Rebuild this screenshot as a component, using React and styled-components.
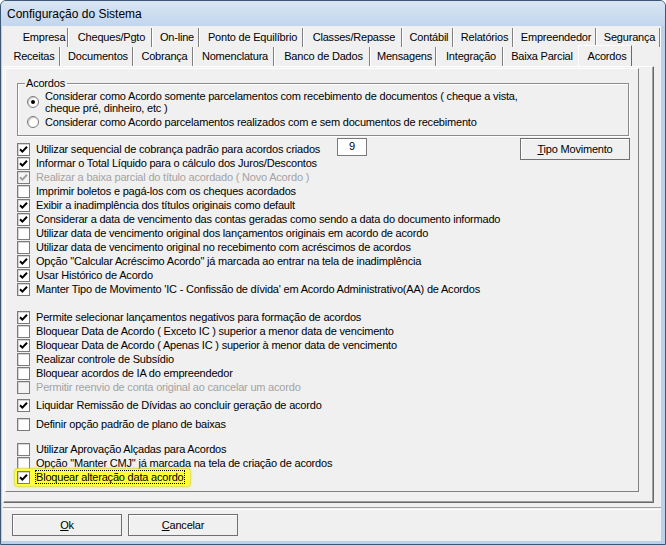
import React from "react";
import styled, { createGlobalStyle } from "styled-components";

const GlobalStyle = createGlobalStyle`
  html, body {
    margin: 0;
    padding: 0;
    background: #ffffff;
  }
  body {
    font-family: "Liberation Sans", Arial, sans-serif;
    font-size: 11px;
    letter-spacing: -0.2px;
    color: #000;
  }
`;

const Window = styled.div`
  width: 666px;
  height: 545px;
  box-sizing: border-box;
  display: flex;
  flex-direction: column;
  border: 1px solid #3d5675;
  border-radius: 6px 6px 0 0;
  background: #b9d1ea;
  overflow: hidden;
`;

const TitleBar = styled.div`
  height: 25px;
  flex: none;
  display: flex;
  align-items: center;
  padding-left: 6px;
  background: linear-gradient(#d9e6f4, #c2d6ed);
  font-size: 12px;
  letter-spacing: 0;
  color: #000;
`;

const Frame = styled.div`
  flex: 1;
  display: flex;
  padding: 0 4px 3px 1px;
  min-height: 0;
`;

const Client = styled.div`
  flex: 1;
  display: flex;
  flex-direction: column;
  background: #f0f0f0;
  min-width: 0;
`;

const Tabs = styled.div`
  padding-top: 2px;
  display: flex;
  flex-direction: column;
  overflow: hidden;
`;

const TabRow = styled.div`
  display: flex;
  height: 19px;
  margin-left: ${(p) => p.$indent}px;
`;

const Tab = styled.div`
  flex: none;
  box-sizing: border-box;
  width: ${(p) => p.$w}px;
  height: 19px;
  padding-left: 4px;
  text-align: center;
  line-height: 19px;
  white-space: nowrap;
  border-right: 1px solid ${(p) => (p.$noSep ? "transparent" : "#808080")};
  box-shadow: ${(p) => (p.$noSep ? "none" : "1px 0 0 #ffffff")};
`;

const ActiveTab = styled.div`
  flex: none;
  box-sizing: border-box;
  width: ${(p) => p.$w}px;
  height: 21px;
  margin-top: -2px;
  padding: 1px 0 0 4px;
  text-align: center;
  line-height: 19px;
  background: #f0f0f0;
  border-top: 1px solid #ffffff;
  border-left: 1px solid #ffffff;
  border-right: 1px solid #696969;
  position: relative;
  z-index: 2;
`;

const Page = styled.div`
  box-sizing: border-box;
  margin-left: 1px;
  width: 651px;
  height: 437px;
  border-top: 1px solid #ffffff;
  border-left: 1px solid #ffffff;
  border-right: 1px solid #696969;
  border-bottom: 1px solid #696969;
  box-shadow: inset -1px -1px 0 #a0a0a0;
  padding: 1px 0 0 1px;
`;

const Inner = styled.div`
  box-sizing: border-box;
  width: 634px;
  height: 424px;
  border-right: 1px solid #808080;
  border-bottom: 1px solid #808080;
  border-left: 1px solid #ffffff;
  border-top: 1px solid #ffffff;
  display: flex;
  flex-direction: column;
`;

const Group = styled.fieldset`
  box-sizing: border-box;
  margin: 8px 0 0 11px;
  width: 612px;
  padding: 0 0 7px 9px;
  border: 1px solid #8c8c8c;
  box-shadow: inset 1px 1px 0 #ffffff, 1px 1px 0 #ffffff;
  min-width: 0;
`;

const Legend = styled.legend`
  margin-left: -2px;
  padding: 0 2px 0 1px;
  line-height: 13px;
`;

const RadioRow = styled.div`
  display: flex;
  align-items: center;
  gap: 6px;
  line-height: 12px;
  margin-top: ${(p) => p.$top || 0}px;
`;

const RadioDot = styled.span`
  flex: none;
  width: 12px;
  height: 12px;
  box-sizing: border-box;
  border-radius: 50%;
  border: 1px solid #7a7a7a;
  background: #ffffff;
  box-shadow: inset 1px 1px 1px #c8c8c8;
  display: flex;
  align-items: center;
  justify-content: center;
  &::after {
    content: "";
    width: 4px;
    height: 4px;
    border-radius: 50%;
    background: ${(p) => (p.$on ? "#000" : "transparent")};
  }
`;

const List = styled.div`
  display: flex;
  flex-direction: column;
  padding: 6px 8px 0 11px;
`;

const Row = styled.div`
  display: flex;
  align-items: center;
  height: 14px;
  margin-top: ${(p) => p.$gap || 0}px;
`;

const Check = styled.label`
  display: flex;
  align-items: center;
  gap: 6px;
  white-space: nowrap;
  color: ${(p) => (p.$disabled ? "#a3a3a3" : "#000")};
  width: ${(p) => (p.$w ? `${p.$w}px` : "auto")};
`;

const Box = styled.span`
  flex: none;
  width: 13px;
  height: 13px;
  box-sizing: border-box;
  border: 1px solid #7b7b7b;
  background: ${(p) => (p.$disabled ? "#f4f4f4" : "#ffffff")};
  box-shadow: inset 1px 1px 0 #d4d4d4;
  display: flex;
  align-items: center;
  justify-content: center;
`;

const Highlight = styled.div`
  display: flex;
  align-items: center;
  height: 17px;
  margin-left: -2px;
  padding: 0 6px 0 2px;
  background: #ffff3a;
  border-radius: 3px;
  box-shadow: 0 0 2px 1px #dede30;
`;

const Focus = styled.span`
  outline: 1px dotted #000;
  outline-offset: 0;
  line-height: 12px;
`;

const NumBox = styled.div`
  flex: none;
  width: 30px;
  height: 18px;
  box-sizing: border-box;
  margin-top: -4px;
  border: 1px solid #7a7a7a;
  background: #ffffff;
  text-align: center;
  line-height: 15px;
`;

const Button = styled.button`
  flex: none;
  box-sizing: border-box;
  width: ${(p) => p.$w}px;
  height: 22px;
  margin-left: ${(p) => (p.$push ? "auto" : "0")};
  border: 1px solid #707070;
  background: #f0f0f0;
  font-family: inherit;
  font-size: 11px;
  letter-spacing: -0.2px;
  color: #000;
  padding: 0;
  box-shadow: inset 1px 1px 0 #ffffff;
`;

const Separator = styled.div`
  margin: 4px 0 0 1px;
  height: 1px;
  border-top: 1px solid #a0a0a0;
  border-bottom: 1px solid #ffffff;
`;

const Footer = styled.div`
  display: flex;
  gap: 6px;
  padding: 4px 0 0 10px;
`;

const Tick = ({ disabled }) => (
  <svg width="9" height="9" viewBox="0 0 9 9">
    <path
      d="M1 4.2 L3.4 6.6 L8 1.8"
      fill="none"
      stroke={disabled ? "#a0a0a0" : "#000"}
      strokeWidth="2"
    />
  </svg>
);

const CheckItem = ({ on, disabled, w, children }) => (
  <Check $disabled={disabled} $w={w}>
    <Box $disabled={disabled}>{on && <Tick disabled={disabled} />}</Box>
    {children}
  </Check>
);

const backRow = [
  ["Empresa", 51],
  ["Cheques/Pgto", 84],
  ["On-line", 47],
  ["Ponto de Equilíbrio", 104],
  ["Classes/Repasse", 99],
  ["Contábil", 51],
  ["Relatórios", 60],
  ["Empreendedor", 83],
  ["Segurança", 64],
];

const frontRow = [
  ["Receitas", 55],
  ["Documentos", 73],
  ["Cobrança", 60],
  ["Nomenclatura", 81],
  ["Banco de Dados", 96],
  ["Mensagens", 66],
  ["Integração", 67],
  ["Baixa Parcial", 75],
];

const options = [
  { t: "Informar o Total Líquido para o cálculo dos Juros/Descontos", on: true },
  { t: "Realizar a baixa parcial do título acordado ( Novo Acordo )", on: true, disabled: true },
  { t: "Imprimir boletos e pagá-los com os cheques acordados" },
  { t: "Exibir a inadimplência dos títulos originais como default", on: true },
  { t: "Considerar a data de vencimento das contas geradas como sendo a data do documento informado", on: true },
  { t: "Utilizar data de vencimento original dos lançamentos originais em acordo de acordo" },
  { t: "Utilizar data de vencimento original no recebimento com acréscimos de acordos" },
  { t: "Opção \"Calcular Acréscimo Acordo\" já marcada ao entrar na tela de inadimplência", on: true },
  { t: "Usar Histórico de Acordo", on: true },
  { t: "Manter Tipo de Movimento 'IC - Confissão de dívida' em Acordo Administrativo(AA) de Acordos", on: true },
  { t: "Permite selecionar lançamentos negativos para formação de acordos", on: true, gap: 14 },
  { t: "Bloquear Data de Acordo ( Exceto IC ) superior a menor data de vencimento" },
  { t: "Bloquear Data de Acordo ( Apenas IC ) superior à menor data de vencimento", on: true },
  { t: "Realizar controle de Subsídio" },
  { t: "Bloquear acordos de IA do empreendedor" },
  { t: "Permitir reenvio de conta original ao cancelar um acordo", disabled: true },
  { t: "Liquidar Remissão de Dívidas ao concluir geração de acordo", on: true, gap: 4 },
  { t: "Definir opção padrão de plano de baixas", gap: 5 },
  { t: "Utilizar Aprovação Alçadas para Acordos", gap: 11 },
  { t: "Opção \"Manter CMJ\" já marcada na tela de criação de acordos" },
];

export default function App() {
  return (
    <>
      <GlobalStyle />
      <Window>
        <TitleBar>Configuração do Sistema</TitleBar>
        <Frame>
          <Client>
            <Tabs>
              <TabRow $indent={15}>
                {backRow.map(([t, w]) => (
                  <Tab key={t} $w={w}>
                    {t}
                  </Tab>
                ))}
              </TabRow>
              <TabRow $indent={3}>
                {frontRow.map(([t, w], i) => (
                  <Tab key={t} $w={w} $noSep={i === frontRow.length - 1}>
                    {t}
                  </Tab>
                ))}
                <ActiveTab $w={54}>Acordos</ActiveTab>
              </TabRow>
            </Tabs>
            <Page>
              <Inner>
                <Group>
                  <Legend>Acordos</Legend>
                  <RadioRow>
                    <RadioDot $on />
                    <span>
                      Considerar como Acordo somente parcelamentos com recebimento de documentos ( cheque a vista,
                      <br />
                      cheque pré, dinheiro, etc )
                    </span>
                  </RadioRow>
                  <RadioRow $top={2}>
                    <RadioDot />
                    <span>Considerar como Acordo parcelamentos realizados com e sem documentos de recebimento</span>
                  </RadioRow>
                </Group>
                <List>
                  <Row>
                    <CheckItem on w={320}>
                      Utilizar sequencial de cobrança padrão para acordos criados
                    </CheckItem>
                    <NumBox>9</NumBox>
                    <Button $w={110} $push>
                      <u>T</u>ipo Movimento
                    </Button>
                  </Row>
                  {options.map((o) => (
                    <Row key={o.t} $gap={o.gap}>
                      <CheckItem on={o.on} disabled={o.disabled}>
                        {o.t}
                      </CheckItem>
                    </Row>
                  ))}
                  <Row>
                    <Highlight>
                      <CheckItem on>
                        <Focus>Bloquear alteração data acordo</Focus>
                      </CheckItem>
                    </Highlight>
                  </Row>
                </List>
              </Inner>
            </Page>
            <Separator />
            <Footer>
              <Button $w={110}>
                <u>O</u>k
              </Button>
              <Button $w={110}>
                <u>C</u>ancelar
              </Button>
            </Footer>
          </Client>
        </Frame>
      </Window>
    </>
  );
}
